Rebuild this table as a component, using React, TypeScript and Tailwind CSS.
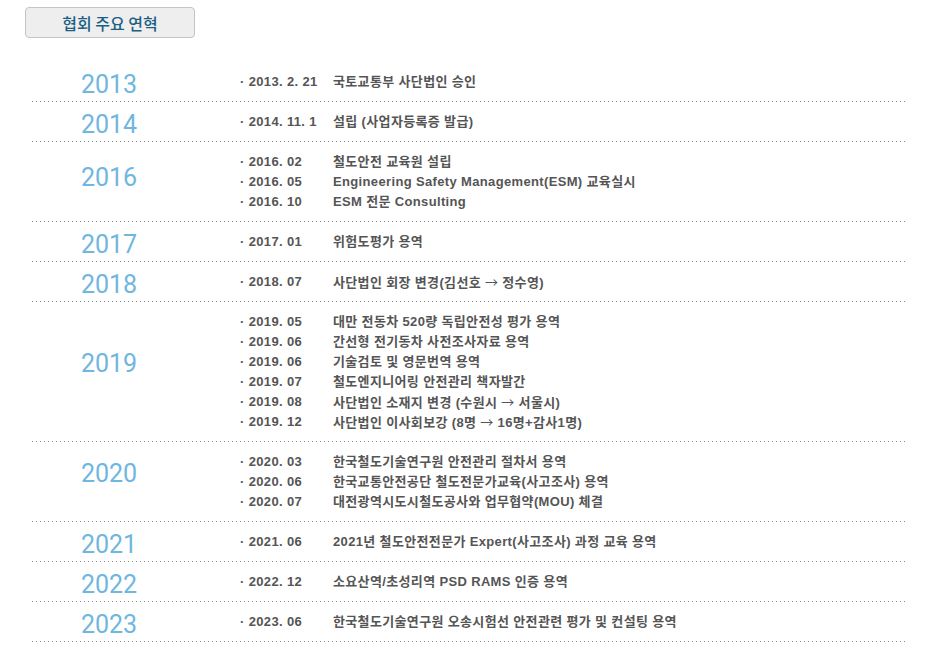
const history = [
  { year: '2013', items: [['2013. 2. 21', '국토교통부 사단법인 승인']] },
  { year: '2014', items: [['2014. 11. 1', '설립 (사업자등록증 발급)']] },
  {
    year: '2016',
    lift: 'pb-[8px]',
    items: [
      ['2016. 02', '철도안전 교육원 설립'],
      ['2016. 05', 'Engineering Safety Management(ESM) 교육실시'],
      ['2016. 10', 'ESM 전문 Consulting'],
    ],
  },
  { year: '2017', items: [['2017. 01', '위험도평가 용역']] },
  { year: '2018', items: [['2018. 07', '사단법인 회장 변경(김선호 → 정수영)']] },
  {
    year: '2019',
    lift: 'pb-[16px]',
    items: [
      ['2019. 05', '대만 전동차 520량 독립안전성 평가 용역'],
      ['2019. 06', '간선형 전기동차 사전조사자료 용역'],
      ['2019. 06', '기술검토 및 영문번역 용역'],
      ['2019. 07', '철도엔지니어링 안전관리 책자발간'],
      ['2019. 08', '사단법인 소재지 변경 (수원시 → 서울시)'],
      ['2019. 12', '사단법인 이사회보강 (8명 → 16명+감사1명)'],
    ],
  },
  {
    year: '2020',
    lift: 'pb-[16px]',
    items: [
      ['2020. 03', '한국철도기술연구원 안전관리 절차서 용역'],
      ['2020. 06', '한국교통안전공단 철도전문가교육(사고조사) 용역'],
      ['2020. 07', '대전광역시도시철도공사와 업무협약(MOU) 체결'],
    ],
  },
  { year: '2021', items: [['2021. 06', '2021년 철도안전전문가 Expert(사고조사) 과정 교육 용역']] },
  { year: '2022', items: [['2022. 12', '소요산역/초성리역 PSD RAMS 인증 용역']] },
  { year: '2023', items: [['2023. 06', '한국철도기술연구원 오송시험선 안전관련 평가 및 컨설팅 용역']] },
];

const DottedLine = () => (
  <div className="h-px w-full bg-[linear-gradient(to_right,#8a8a8a_1px,transparent_1px)] bg-[length:4px_1px] bg-repeat-x" />
);

// 화살표는 한글 폰트로 (Liberation 화살표가 너무 작음)
const withArrows = (text: string) =>
  text.split('→').map((part, i, arr) => (
    <span key={i}>
      {part}
      {i < arr.length - 1 && <span className="font-['Noto_Sans_CJK_KR',sans-serif] font-normal">→</span>}
    </span>
  ));

export default function App() {
  return (
    <div className="w-[945px] h-[666px] bg-white pt-[7px] font-['Liberation_Sans','Noto_Sans_CJK_KR',sans-serif]">
      <div className="ml-[25px] flex h-[31px] w-[170px] items-center justify-center rounded-[4px] border border-[#c4c4c4] bg-[#eeeeee] font-['Noto_Sans_CJK_KR',sans-serif] text-[16px] font-medium text-[#1b5f84]">
        협회 주요 연혁
      </div>

      <div className="ml-[32px] mt-[24px] w-[875px]">
        {history.map((row) => (
          <div key={row.year}>
            <div className="flex items-center pt-[10px] pb-[9px]">
              <div
                className={`w-[154px] text-center font-['Roboto',sans-serif] text-[25px] leading-[20px] text-[#6fb6e1] ${row.lift ?? 'pt-[3px] -mb-[3px]'}`}
              >
                {row.year}
              </div>
              <div className="ml-[54px] flex flex-col">
                {row.items.map(([date, text], i) => (
                  <div
                    key={i}
                    className="flex h-[20px] items-center text-[13px] font-bold tracking-[0.35px] text-[#555555]"
                  >
                    <span className="w-[93px] shrink-0 whitespace-pre">{'· ' + date}</span>
                    <span className="whitespace-pre">{withArrows(text)}</span>
                  </div>
                ))}
              </div>
            </div>
            <DottedLine />
          </div>
        ))}
      </div>
    </div>
  );
}
